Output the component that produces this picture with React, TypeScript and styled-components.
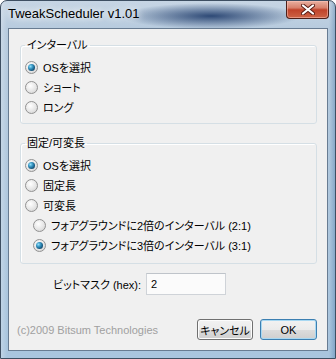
import React from 'react';
import styled, { createGlobalStyle } from 'styled-components';

type Option = {
  label: string,
  checked?: boolean,
  indent?: boolean
};

const intervalOptions: Option[] = [
  { label: 'OSを選択', checked: true },
  { label: 'ショート' },
  { label: 'ロング' }
];

const lengthOptions: Option[] = [
  { label: 'OSを選択', checked: true },
  { label: '固定長' },
  { label: '可変長' },
  { label: 'フォアグラウンドに2倍のインターバル (2:1)', indent: true },
  { label: 'フォアグラウンドに3倍のインターバル (3:1)', checked: true, indent: true }
];

const CloseIcon = () => (
  <svg width="14" height="11" viewBox="0 0 14 11">
    <path d="M2 1.5 L12 9.5 M12 1.5 L2 9.5" stroke="#5a1c14" strokeWidth="4" strokeLinecap="round" />
    <path d="M2 1.5 L12 9.5 M12 1.5 L2 9.5" stroke="#ffffff" strokeWidth="2.2" strokeLinecap="round" />
  </svg>
);

const App: React.FC = () => {
  return (
    <>
      <GlobalStyle />
      <Window>
        <TitleBar>
          <Title>TweakScheduler v1.01</Title>
          <CloseButton><CloseIcon /></CloseButton>
        </TitleBar>
        <Client>
          <GroupBox>
            <Legend>インターバル</Legend>
            {intervalOptions.map((o, i) => (
              <RadioRow key={i} $indent={o.indent}>
                <Radio $checked={o.checked} />
                <span>{o.label}</span>
              </RadioRow>
            ))}
          </GroupBox>
          <GroupBox $gap={11} $bottom={8}>
            <Legend>固定/可変長</Legend>
            {lengthOptions.map((o, i) => (
              <RadioRow key={i} $indent={o.indent}>
                <Radio $checked={o.checked} />
                <span>{o.label}</span>
              </RadioRow>
            ))}
          </GroupBox>
          <MaskRow>
            <span>ビットマスク (hex):</span>
            <MaskInput>2</MaskInput>
          </MaskRow>
          <Footer>
            <Copyright>(c)2009 Bitsum Technologies</Copyright>
            <Buttons>
              <Button>キャンセル</Button>
              <Button $default>OK</Button>
            </Buttons>
          </Footer>
        </Client>
      </Window>
    </>
  );
};

const GlobalStyle = createGlobalStyle`
html, body {
  margin: 0;
  padding: 0;
  background: #ffffff;
}
body {
  width: 336px;
  height: 359px;
  overflow: hidden;
  font-family: "Liberation Sans", "Noto Sans CJK JP", sans-serif;
}
`;

const Window = styled.div`
width: 336px;
height: 359px;
box-sizing: border-box;
display: flex;
flex-direction: column;
border: 1px solid #3e4f62;
border-radius: 7px 7px 0 0;
background:
  radial-gradient(ellipse 90px 13px at 210px 15px, rgba(38, 66, 112, 0.95), rgba(38, 66, 112, 0)),
  linear-gradient(90deg, rgba(255,255,255,0.25) 0, rgba(255,255,255,0) 6px, rgba(255,255,255,0) 328px, rgba(60,110,160,0.35) 334px),
  linear-gradient(180deg, #c6d5e4 0, #b7cbde 28px, #a9c5de 100%);
overflow: hidden;
`;

const TitleBar = styled.div`
height: 27px;
display: flex;
justify-content: space-between;
align-items: flex-start;
padding-left: 7px;
`;

const Title = styled.div`
font-family: "Liberation Sans", sans-serif;
font-size: 13px;
line-height: 26px;
color: #000000;
text-shadow: 0 0 6px rgba(255, 255, 255, 0.95), 0 0 10px rgba(255, 255, 255, 0.8);
`;

const CloseButton = styled.div`
width: 43px;
height: 18px;
box-sizing: border-box;
margin-right: 6px;
display: flex;
align-items: center;
justify-content: center;
border: 1px solid #4d1f18;
border-top: none;
border-radius: 0 0 4px 4px;
background: linear-gradient(180deg, #e9b0a0 0, #d7806c 40%, #c0432a 52%, #cd6446 100%);
box-shadow: inset 0 0 0 1px rgba(255, 200, 190, 0.5);
`;

const Client = styled.div`
flex: 1;
margin: 0 7px 7px 7px;
border: 1px solid #687c92;
background: #f0f0f0;
padding: 8px 10px 10px 8px;
display: flex;
flex-direction: column;
font-size: 11px;
color: #000000;
font-feature-settings: "palt";
`;

const GroupBox = styled.fieldset<{ $gap?: number, $bottom?: number }>`
margin: ${p => p.$gap || 0}px 0 0 3px;
padding: 4px 4px ${p => p.$bottom || 6}px 4px;
min-width: 0;
border: 1px solid #d5dfe5;
border-radius: 3px;
box-shadow: inset 1px 1px 0 #ffffff;
`;

const Legend = styled.legend`
padding: 0 2px;
line-height: 16px;
font-size: 11px;
`;

const RadioRow = styled.div<{ $indent?: boolean }>`
height: 20px;
display: flex;
align-items: center;
gap: 5px;
padding-left: ${p => p.$indent ? 8 : 0}px;
white-space: nowrap;
`;

const Radio = styled.span<{ $checked?: boolean }>`
width: 13px;
height: 13px;
box-sizing: border-box;
flex: none;
border-radius: 50%;
border: 1px solid #929292;
background: radial-gradient(circle at 40% 35%, #ffffff 0, #e6e6e6 55%, #cdcdcd 100%);
display: flex;
align-items: center;
justify-content: center;
&::after {
  content: '';
  display: ${p => p.$checked ? 'block' : 'none'};
  width: 7px;
  height: 7px;
  border-radius: 50%;
  background: radial-gradient(circle at 35% 35%, #8fe0fb 0, #2d8ab8 40%, #144b6e 75%, #0c3450 100%);
}
`;

const MaskRow = styled.div`
margin: 9px 0 0 36px;
display: flex;
align-items: center;
gap: 5px;
`;

const MaskInput = styled.div`
width: 80px;
height: 22px;
box-sizing: border-box;
border: 1px solid #cfd3d8;
border-top-color: #bfc4ca;
background: #fbfbfb;
padding: 0 4px;
line-height: 20px;
`;

const Footer = styled.div`
margin-top: auto;
display: flex;
justify-content: space-between;
align-items: center;
`;

const Copyright = styled.span`
color: #a0a0a0;
`;

const Buttons = styled.div`
display: flex;
gap: 7px;
`;

const Button = styled.div<{ $default?: boolean }>`
width: ${p => p.$default ? 57 : 56}px;
height: 21px;
box-sizing: border-box;
display: flex;
align-items: center;
justify-content: center;
border: 1px solid ${p => p.$default ? '#3c7fb1' : '#707070'};
border-radius: 3px;
background: linear-gradient(180deg, #f2f2f2 0, #ebebeb 50%, #dddddd 51%, #cfcfcf 100%);
box-shadow: inset 0 0 0 1px ${p => p.$default ? '#a8d8f2' : '#fcfcfc'};
white-space: nowrap;
user-select: none;
`;

export default App;
